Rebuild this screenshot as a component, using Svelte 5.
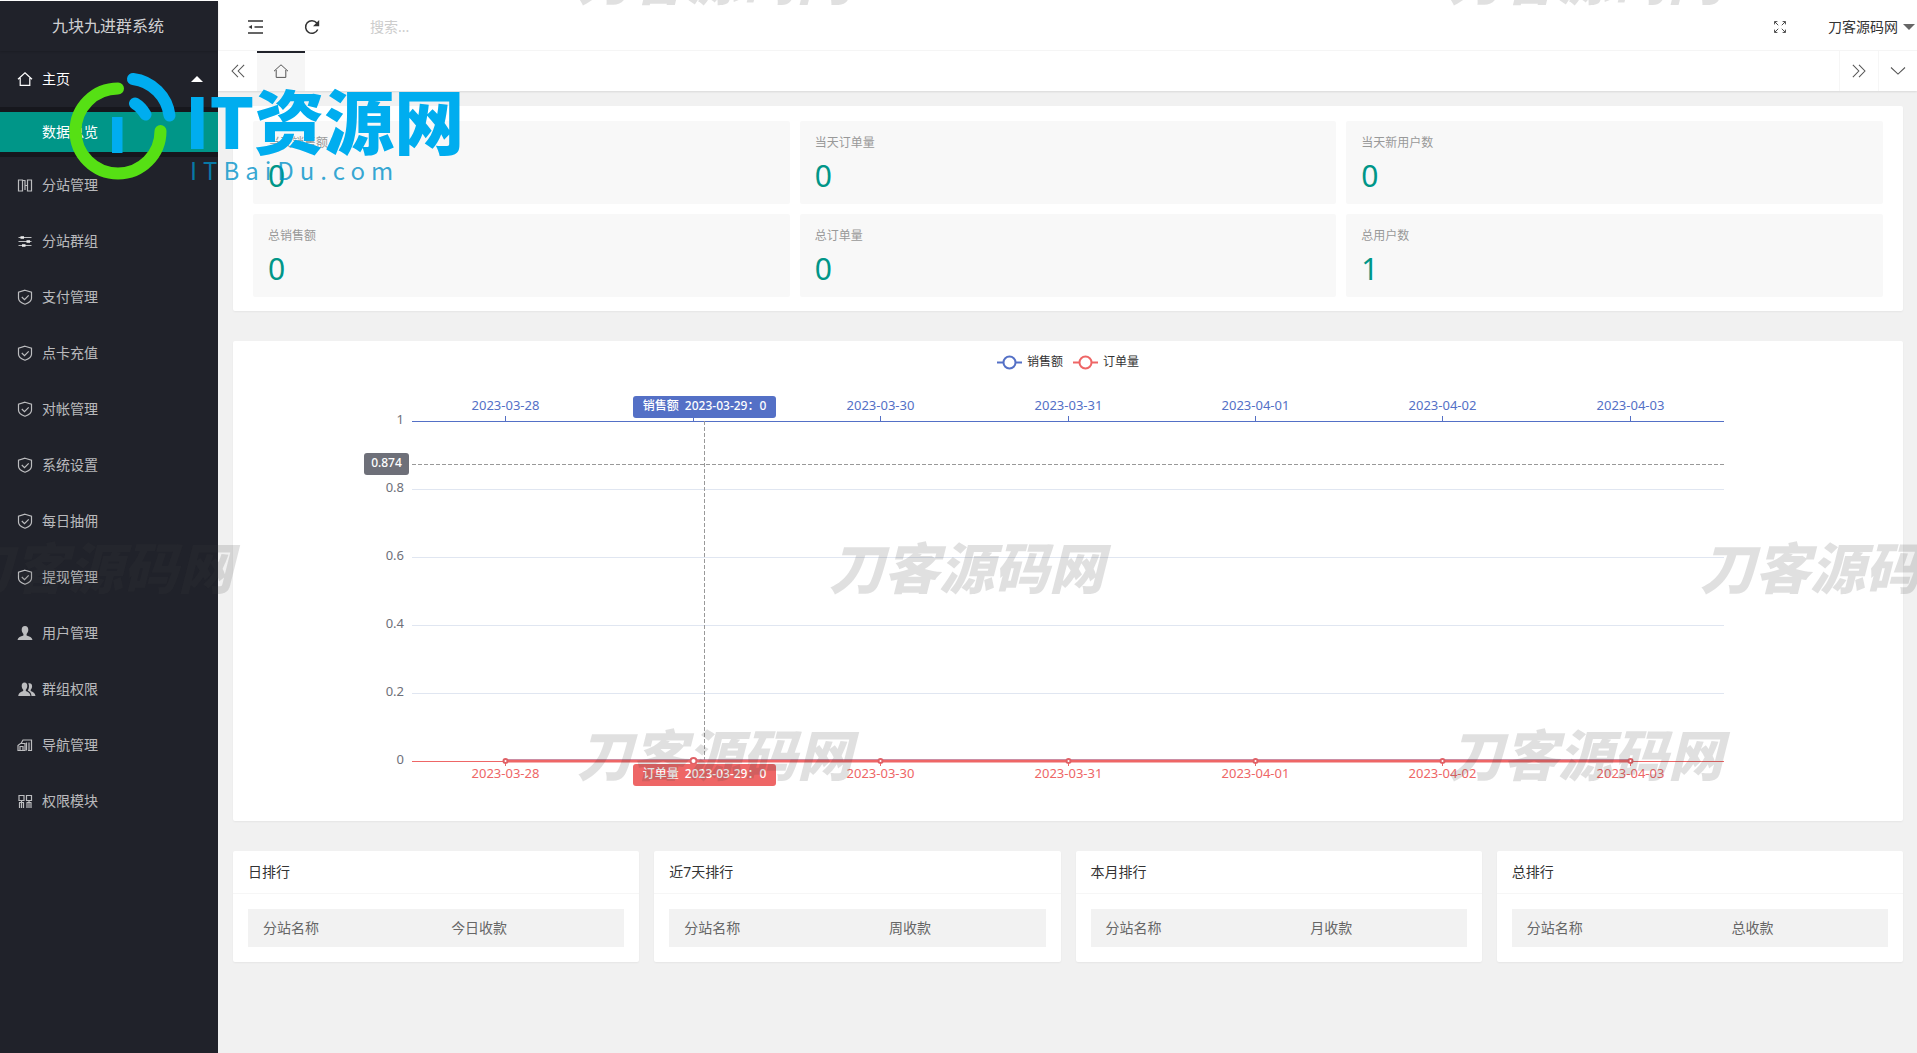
<script>
  const menu = [
    { icon: 'columns', label: '分站管理' },
    { icon: 'sliders', label: '分站群组' },
    { icon: 'shield', label: '支付管理' },
    { icon: 'shield', label: '点卡充值' },
    { icon: 'shield', label: '对帐管理' },
    { icon: 'shield', label: '系统设置' },
    { icon: 'shield', label: '每日抽佣' },
    { icon: 'shield', label: '提现管理' },
    { icon: 'user', label: '用户管理' },
    { icon: 'group', label: '群组权限' },
    { icon: 'nav', label: '导航管理' },
    { icon: 'modules', label: '权限模块' }
  ];

  const stats = [
    { label: '当天销售额', value: 0 },
    { label: '当天订单量', value: 0 },
    { label: '当天新用户数', value: 0 },
    { label: '总销售额', value: 0 },
    { label: '总订单量', value: 0 },
    { label: '总用户数', value: 1 }
  ];

  const ranks = [
    { title: '日排行', column: '今日收款' },
    { title: '近7天排行', column: '周收款' },
    { title: '本月排行', column: '月收款' },
    { title: '总排行', column: '总收款' }
  ];

  const dates = [
    '2023-03-28',
    '2023-03-29',
    '2023-03-30',
    '2023-03-31',
    '2023-04-01',
    '2023-04-02',
    '2023-04-03'
  ];
  const yTicks = [0, 0.2, 0.4, 0.6, 0.8, 1];
  const active = 1;
  const pointerValue = 0.874;

  // chart grid
  const top = 70;
  const bottom = 410;
  let chartWidth = $state(1640);
  let left = $derived(Math.round(chartWidth * 0.1));
  let right = $derived(Math.round(chartWidth * 0.9));
  let band = $derived((right - left) / dates.length);
  let center = $derived(Math.round(chartWidth / 2));
  let pointerX = $derived(Math.round(left + (right - left) * 0.2228) + 0.5);

  const yAt = (v) => Math.round(bottom - (bottom - top) * v) + 0.5;
  const pointerY = yAt(pointerValue);

  function xAt(i) {
    return Math.floor(left + band * (i + 0.5)) + 0.5;
  }
</script>

{#snippet icon(name)}
  <svg class="icon" viewBox="0 0 16 16" aria-hidden="true">
    {#if name === 'home'}
      <path d="M1 8.2 8 1.8l7 6.4M3.2 7v7.4h9.6V7" />
    {:else if name === 'columns'}
      <path d="M1.500 3h4v11h-4zM10.500 3h4v11h-4zM5.500 3.500H8v5M8 8.500v4.500M8 8.500h2.500" />
    {:else if name === 'sliders'}
      <path d="M1.500 4.500h13M1.500 8.500h13M1.500 12.500h13" />
      <path class="solid" d="M3.500 3h3.500v3H3.500zM9.500 7H13v3H9.500zM5 11h3.500v3H5z" />
    {:else if name === 'shield'}
      <path d="M8 1.200 14.500 3.300v6c0 2.600-2.600 4.700-6.500 6-3.900-1.300-6.500-3.400-6.500-6v-6z" />
      <path d="m4.800 8 2.700 2.600 4.200-4.300" />
    {:else if name === 'user'}
      <path class="solid" d="M8 1c2.200 0 3.300 1.500 3.300 3.700 0 1.700-.7 3.200-1.700 4.200v1.500c2.900.9 5.400 1.700 5.900 4.600H.5c.5-2.900 3-3.700 5.900-4.600V8.900c-1-1-1.700-2.500-1.700-4.200C4.700 2.500 5.800 1 8 1z" />
    {:else if name === 'group'}
      <path class="solid" d="M7.500 1.500c1.900 0 2.800 1.400 2.800 3.400 0 1.500-.6 2.900-1.500 3.800V10c2.500.9 4.300 1.800 4.700 5H1.200c.4-3.200 2.300-4.100 5-5V8.700c-.9-.9-1.500-2.300-1.500-3.800 0-2 .9-3.400 2.800-3.400z" />
      <path class="solid" d="M11.300 2.300c2.400-.6 3.800.8 3.800 3 0 1.500-.6 2.700-1.400 3.500v1.300c2.400.9 4.300 1.900 4.800 4.900h-4c-.3-2.700-1.500-4.400-3.700-5.400 1.100-1.600 1.800-5 .5-7.300z" />
    {:else if name === 'nav'}
      <path d="M4 6.500 6 3h8.500v10.500H11M1 8.500l2.500-2H8v7H1zM3 13V9.500h3V13M9.500 5.500v8M12 5.500v8" />
    {:else if name === 'modules'}
      <path d="M2 2.500h5v5H2zM9.500 2.500h5v5h-5zM2 9.500h5M9.500 9.500h5M2.500 9.500V15M6.500 9.500V15M10 9.500V15M14 9.500V15M4.500 7.500V15M12 7.500V15" />
    {:else if name === 'shrink'}
      <path d="M0 2h15M6.500 8H15M0 14h15" />
      <path class="solid" d="M.5 8 4 6v4z" />
    {:else if name === 'refresh'}
      <path d="M13.700 10.500A6.300 6.300 0 1 1 12.800 4" />
      <path class="solid" d="M15.200 1v6.300H9z" />
    {:else if name === 'full'}
      <path d="M6 6 2 2M1.800 5V1.800H5M10 6l4-4M11 1.800h3.200V5M6 10l-4 4M1.800 11v3.200H5M10 10l4 4M11 14.200h3.200V11" />
    {:else if name === 'prev'}
      <path d="M8 1 1.200 8 8 15M15 1 8.200 8l6.800 7" />
    {:else if name === 'next'}
      <path d="M1 1l6.800 7L1 15M8 1l6.800 7L8 15" />
    {:else if name === 'down'}
      <path d="m0 4 8 7.500L16 4" />
    {/if}
  </svg>
{/snippet}

<div class="shell">
  <aside class="side">
    <div class="logo">九块九进群系统</div>
    <nav>
      <a class="nav-item open" href="#home">
        {@render icon('home')}
        <span>主页</span>
        <i class="caret up"></i>
      </a>
      <div class="sub">
        <a href="#overview">数据总览</a>
      </div>
      {#each menu as item}
        <a class="nav-item" href="#{item.label}">
          {@render icon(item.icon)}
          <span>{item.label}</span>
        </a>
      {/each}
    </nav>
  </aside>

  <div class="main">
    <header class="header">
      <button class="tool" aria-label="侧边伸缩">{@render icon('shrink')}</button>
      <button class="tool" aria-label="刷新">{@render icon('refresh')}</button>
      <input class="search" type="text" placeholder="搜索..." aria-label="搜索" />
      <button class="tool full" aria-label="全屏">{@render icon('full')}</button>
      <button class="account">刀客源码网<i class="caret"></i></button>
    </header>

    <div class="tabs">
      <button class="tab-control" aria-label="向左">{@render icon('prev')}</button>
      <a class="tab" href="#home" aria-label="主页">{@render icon('home')}</a>
      <button class="tab-control bordered push" aria-label="向右">{@render icon('next')}</button>
      <button class="tab-control bordered" aria-label="更多">{@render icon('down')}</button>
    </div>

    <main class="content">
      <section class="card stats">
        {#each stats as stat}
          <div class="stat">
            <h3>{stat.label}</h3>
            <p>{stat.value}</p>
          </div>
        {/each}
      </section>

      <section class="card chart-card">
        <div class="chart" bind:clientWidth={chartWidth}>
          <svg width={chartWidth} height="460" role="img" aria-label="销售额 订单量">
            <g class="legend">
              <path class="sales" d="M{center - 71} 11.500h25" />
              <circle class="sales" cx={center - 58.5} cy="11.500" r="6" />
              <text x={center - 41} y="15">销售额</text>
              <path class="orders" d="M{center + 5} 11.500h25" />
              <circle class="orders" cx={center + 17.5} cy="11.500" r="6" />
              <text x={center + 35} y="15">订单量</text>
            </g>

            {#each yTicks as tick}
              {#if tick > 0 && tick < 1}
                <path class="split" d="M{left} {yAt(tick)}H{right}" />
              {/if}
              <text class="y-label" x={left - 8} y={yAt(tick) + 2.5}>{tick}</text>
            {/each}

            <path class="axis sales" d="M{left} {yAt(1)}H{right}" />
            <path class="axis orders" d="M{left} {yAt(0)}H{right}" />
            {#each dates as date, i}
              <path class="axis sales" d="M{xAt(i)} {top}v-5" />
              <path class="axis orders" d="M{xAt(i)} {bottom}v5" />
              {#if i !== active}
                <text class="date sales" x={xAt(i)} y="59">{date}</text>
                <text class="date orders" x={xAt(i)} y="427">{date}</text>
              {/if}
            {/each}

            <path class="pointer" d="M{pointerX} {top}V{bottom}M{left} {pointerY}H{right}" />

            <path class="line sales" d="M{xAt(0)} 409H{xAt(6)}" />
            <path class="line orders" d="M{xAt(0)} 410H{xAt(6)}" />
            {#each dates as _, i}
              <circle class="dot" cx={xAt(i)} cy="410" r={i === active ? 3 : 2} />
            {/each}

            <g class="badge">
              <rect class="sales" x={pointerX - 71.5} y="45" width="143" height="22" rx="3" />
              <text x={pointerX} y="59">销售额&nbsp; {dates[active]}：0</text>
              <rect class="orders" x={pointerX - 71.5} y="413" width="143" height="22" rx="3" />
              <text x={pointerX} y="427">订单量&nbsp; {dates[active]}：0</text>
              <rect class="value" x={left - 48} y={pointerY - 11.5} width="45" height="22" rx="3" />
              <text x={left - 25.5} y={pointerY + 2.5}>{pointerValue}</text>
            </g>
          </svg>
        </div>
      </section>

      <div class="ranks">
        {#each ranks as rank}
          <section class="card">
            <h2>{rank.title}</h2>
            <div class="rank-body">
              <table>
                <thead>
                  <tr>
                    <th>分站名称</th>
                    <th>{rank.column}</th>
                  </tr>
                </thead>
              </table>
            </div>
          </section>
        {/each}
      </div>
    </main>
  </div>

  <!-- watermarks lie over the whole page -->
  <div class="marks" aria-hidden="true">
    <span class="mark m1">刀客源码网</span>
    <span class="mark m2">刀客源码网</span>
    <span class="mark m3">刀客源码网</span>
    <span class="mark m4">刀客源码网</span>
    <span class="mark m5">刀客源码网</span>
    <span class="mark m6">刀客源码网</span>
    <span class="mark m7">刀客源码网</span>

    <div class="brand">
      <svg width="110" height="112" viewBox="68 70 110 112">
        <path class="green" d="M118 88.500A42.500 42.500 0 1 0 160.500 131" />
        <path class="blue" d="M133 79A42 42 0 0 1 169.500 115.500" />
        <path class="blue" d="M135 103.500Q141 107 145.500 114.500" />
        <path class="bar" d="M112 117h10.500v36H112z" />
      </svg>
      <div class="brand-text">
        <strong>IT资源网</strong>
        <span>ITBaiDu.com</span>
      </div>
    </div>
  </div>
</div>

<style>
  :global(body) {
    background: #fff;
  }

  .shell {
    position: relative;
    display: flex;
    box-sizing: border-box;
    min-height: 100vh;
    padding-top: 1px;
    overflow: hidden;
    font-family: 'Noto Sans', 'Noto Sans CJK SC', sans-serif;
    font-size: 14px;
    line-height: 24px;
    color: #333;
  }

  a {
    color: inherit;
    text-decoration: none;
  }

  button {
    display: flex;
    align-items: center;
    justify-content: center;
    padding: 0;
    border: none;
    background: none;
    font: inherit;
    color: inherit;
    cursor: pointer;
  }

  .icon {
    width: 16px;
    height: 16px;
    flex: none;
    fill: none;
    stroke: currentColor;
    stroke-width: 1.2;
    overflow: visible;
  }

  .icon .solid {
    fill: currentColor;
    stroke: none;
  }

  .caret {
    border: 6px solid transparent;
    border-top-color: #666;
    border-bottom-width: 0;
  }

  .caret.up {
    margin-left: auto;
    border-top-width: 0;
    border-bottom: 6px solid #fff;
  }

  .side {
    flex: none;
    width: 218px;
    background: #20222a;
    color: rgba(255, 255, 255, 0.7);
  }

  .logo {
    height: 50px;
    padding-right: 2px;
    line-height: 50px;
    font-size: 16px;
    text-align: center;
    color: rgba(255, 255, 255, 0.8);
    box-shadow: 0 1px 2px rgba(0, 0, 0, 0.15);
  }

  .nav-item {
    display: flex;
    align-items: center;
    gap: 9px;
    height: 56px;
    padding: 0 15px 0 17px;
  }

  .nav-item.open {
    color: #fff;
  }

  .sub {
    padding: 5px 0;
    background: rgba(0, 0, 0, 0.3);
  }

  .sub a {
    display: block;
    padding-left: 42px;
    line-height: 40px;
    background: #009688;
    color: #fff;
  }

  .main {
    flex: 1;
    min-width: 0;
    display: flex;
    flex-direction: column;
  }

  .header {
    display: flex;
    align-items: center;
    box-sizing: border-box;
    height: 50px;
    padding: 2px 2px 0 15px;
    border-bottom: 1px solid #f6f6f6;
  }

  .tool {
    width: 46px;
    height: 46px;
    margin-right: 10px;
  }

  .tool .icon {
    stroke-width: 1.5;
  }

  .search {
    flex: 1;
    min-width: 0;
    margin-left: 25px;
    padding: 0;
    border: none;
    outline: none;
    font: inherit;
    color: #333;
  }

  .search::placeholder {
    color: #ccc;
    opacity: 1;
  }

  .full .icon {
    width: 14px;
    height: 14px;
    stroke-width: 1;
  }

  .account {
    gap: 5px;
    margin-left: 15px;
  }

  .tabs {
    position: relative;
    display: flex;
    height: 40px;
    background: #fff;
    color: #555;
    box-shadow: 0 1px 2px rgba(0, 0, 0, 0.1);
  }

  .tab-control {
    box-sizing: border-box;
    width: 39px;
  }

  .tab-control .icon {
    width: 14px;
    height: 14px;
  }

  .bordered {
    border-left: 1px solid #f6f6f6;
  }

  .push {
    margin-left: auto;
  }

  .tab {
    display: flex;
    align-items: center;
    justify-content: center;
    box-sizing: border-box;
    width: 48px;
    padding-bottom: 2px;
    border-top: 2px solid #20222a;
    background: #f6f6f6;
  }

  .tab .icon {
    stroke-width: 1;
  }

  .content {
    flex: 1;
    padding: 15px 14px 15px 15px;
    background: #f1f1f1;
  }

  .card {
    border-radius: 2px;
    background: #fff;
    box-shadow: 0 1px 2px rgba(0, 0, 0, 0.05);
  }

  .stats {
    display: grid;
    grid-template-columns: repeat(3, 1fr);
    gap: 10px;
    margin-bottom: 30px;
    padding: 15px 20px 14px;
  }

  .stat {
    padding: 10px 15px 8px;
    border-radius: 2px;
    background: #f8f8f8;
  }

  .stat h3 {
    margin: 0;
    font-size: 12px;
    line-height: 24px;
    font-weight: 400;
    color: #999;
  }

  .stat p {
    margin: 0;
    font-size: 30px;
    line-height: 41px;
    color: #009688;
  }

  .chart-card {
    margin-bottom: 30px;
    padding: 10px 15px;
  }

  .chart {
    overflow: hidden;
  }

  .chart svg {
    display: block;
    font-size: 12px;
    fill: none;
  }

  .chart text {
    fill: #333;
  }

  .chart path.sales,
  .legend circle.sales {
    stroke: #5470c6;
  }

  .chart path.orders,
  .legend circle.orders {
    stroke: #ee6666;
  }

  .legend path,
  .legend circle {
    stroke-width: 2;
  }

  .legend circle {
    fill: #fff;
  }

  .split {
    stroke: #e0e6f1;
  }

  .chart .y-label {
    font-size: 13px;
    fill: #6e7079;
    text-anchor: end;
  }

  .chart .date {
    font-size: 13px;
    text-anchor: middle;
  }

  .chart text.sales,
  .badge rect.sales {
    fill: #5470c6;
  }

  .chart text.orders,
  .badge rect.orders {
    fill: #ee6666;
  }

  .pointer {
    stroke: #999;
    stroke-dasharray: 4 2;
  }

  .line {
    stroke-width: 2;
  }

  .line.sales {
    opacity: 0.5;
  }

  .line.orders {
    stroke-width: 3;
  }

  .dot {
    fill: #fff;
    stroke: #e06166;
    stroke-width: 2;
  }

  .badge .value {
    fill: #6e7079;
  }

  .chart .badge text {
    font-weight: 500;
    fill: #fff;
    text-anchor: middle;
  }

  .ranks {
    display: grid;
    grid-template-columns: repeat(4, 1fr);
    gap: 15px;
  }

  .ranks h2 {
    margin: 0;
    padding: 0 15px;
    border-bottom: 1px solid #f6f6f6;
    font-size: 14px;
    font-weight: 400;
    line-height: 42px;
  }

  .rank-body {
    padding: 15px;
  }

  table {
    width: 100%;
    border-collapse: collapse;
    background: #f2f2f2;
    color: #666;
  }

  th {
    padding: 7px 15px;
    font-weight: 400;
    text-align: left;
  }

  .marks {
    position: absolute;
    inset: 0;
    overflow: hidden;
    pointer-events: none;
    font-family: 'Noto Sans CJK SC', sans-serif;
    white-space: nowrap;
  }

  .mark {
    position: absolute;
    font-size: 55px;
    line-height: 56px;
    font-style: italic;
    font-weight: 900;
    color: rgba(60, 60, 60, 0.16);
  }

  .m1 {
    left: 577px;
    top: -52px;
  }

  .m2 {
    left: 1448px;
    top: -52px;
  }

  .m3 {
    left: -42px;
    top: 537px;
  }

  .m4 {
    left: 829px;
    top: 537px;
  }

  .m5 {
    left: 1700px;
    top: 537px;
  }

  .m6 {
    left: 577px;
    top: 724px;
  }

  .m7 {
    left: 1448px;
    top: 724px;
  }

  .brand {
    position: absolute;
    left: 68px;
    top: 70px;
    display: flex;
    gap: 7px;
  }

  .brand svg {
    fill: none;
    stroke-linecap: round;
    stroke-width: 12;
  }

  .green {
    stroke: #56e014;
  }

  .blue {
    stroke: #00adef;
  }

  .bar {
    fill: #00adef;
  }

  .brand-text {
    display: flex;
    flex-direction: column;
    padding-top: 12px;
  }

  .brand-text strong {
    font-size: 70px;
    line-height: 74px;
    font-weight: 900;
    color: #00adef;
  }

  .brand-text span {
    padding-left: 5px;
    font-size: 24px;
    line-height: 28px;
    letter-spacing: 6px;
    color: rgba(0, 145, 200, 0.8);
  }
</style>
